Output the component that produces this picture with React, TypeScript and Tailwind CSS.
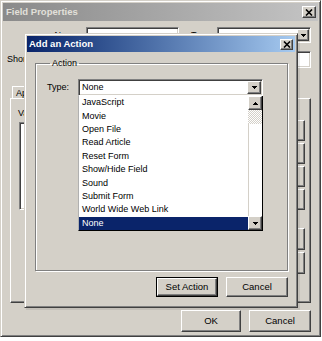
import React from "react";

const raised =
  "border border-t-white border-l-white border-r-[#404040] border-b-[#404040] shadow-[inset_-1px_-1px_0_#808080]";
const sunken =
  "border border-t-[#808080] border-l-[#808080] border-r-white border-b-white shadow-[inset_1px_1px_0_#404040,inset_-1px_-1px_0_#d4d0c8]";

function Arrow({ up }: { up?: boolean }) {
  return (
    <svg width="5" height="3" viewBox="0 0 5 3" shapeRendering="crispEdges">
      {up ? (
        <>
          <rect x="2" y="0" width="1" height="1" fill="#000" />
          <rect x="1" y="1" width="3" height="1" fill="#000" />
          <rect x="0" y="2" width="5" height="1" fill="#000" />
        </>
      ) : (
        <>
          <rect x="0" y="0" width="5" height="1" fill="#000" />
          <rect x="1" y="1" width="3" height="1" fill="#000" />
          <rect x="2" y="2" width="1" height="1" fill="#000" />
        </>
      )}
    </svg>
  );
}

function CloseBtn({ className }: { className: string }) {
  return (
    <div className={`${className} bg-[#d4d0c8] ${raised} flex items-center justify-center`}>
      <svg width="8" height="7" viewBox="0 0 8 7">
        <path d="M1 0.5 L7 6.5 M7 0.5 L1 6.5" stroke="#000" strokeWidth="1.6" fill="none" />
      </svg>
    </div>
  );
}

const items = [
  "JavaScript",
  "Movie",
  "Open File",
  "Read Article",
  "Reset Form",
  "Show/Hide Field",
  "Sound",
  "Submit Form",
  "World Wide Web Link",
  "None",
];

export default function App() {
  return (
    <div className="w-[322px] h-[341px] bg-white relative overflow-hidden font-['Liberation_Sans',Arial,sans-serif] text-[9px] text-black leading-none">
      {/* Outer window: Field Properties */}
      <div className="w-[321px] h-[337px] bg-[#d4d0c8] border border-t-[#d4d0c8] border-l-[#d4d0c8] border-r-[#404040] border-b-[#404040] shadow-[inset_1px_1px_0_#fff,inset_-1px_-1px_0_#808080] p-[2px] flex flex-col">
        <div className="h-[18px] shrink-0 flex items-center justify-between pl-[3px] pr-[2px] bg-gradient-to-r from-[#8a8a8a] to-[#c4c4c4]">
          <span className="font-bold text-[9.5px] text-[#e2e0da]">Field Properties</span>
          <CloseBtn className="w-[14px] h-[12px]" />
        </div>

        <div className="mt-[6px] h-[16px] flex shrink-0">
          <div className="w-[83px] pr-[5px] text-right leading-[16px]">Name:</div>
          <div className={`w-[93px] bg-white ${sunken}`} />
          <div className="w-[38px] pr-[4px] text-right leading-[16px]">Type:</div>
          <div className={`w-[94px] bg-white ${sunken} flex justify-end items-center pr-[1px]`}>
            <div className={`w-[12px] h-[12px] bg-[#d4d0c8] ${raised} flex items-center justify-center`}>
              <Arrow />
            </div>
          </div>
        </div>

        <div className="mt-[8px] h-[17px] flex items-center shrink-0 pr-[7px]">
          <div className="pl-[4px] leading-[17px]">Short Description:</div>
          <div className="flex-1" />
          <div className={`w-[150px] h-[17px] bg-white ${sunken}`} />
        </div>

        <div className="mt-[18px] ml-[9px] flex shrink-0">
          <div className="h-[12px] pl-[3px] pr-[3px] border border-b-0 border-t-white border-l-white border-r-[#404040] bg-[#d4d0c8] leading-[12px]">
            Appearance
          </div>
        </div>

        <div className="ml-[7px] w-[301px] h-[205px] shrink-0 border border-t-white border-l-white border-r-[#404040] border-b-[#404040] shadow-[inset_-1px_-1px_0_#808080] flex pl-[7px] pr-[5px]">
          <div className="flex flex-col">
            <div className="mt-[8px] leading-[12px]">Values:</div>
            <div className={`mt-[3px] ml-[1px] w-[80px] h-[88px] bg-white ${sunken}`} />
          </div>
          <div className="flex-1" />
          <div className="flex flex-col pt-[21px] gap-[2px]">
            {[0, 1, 2, 3].map((b) => (
              <div key={b} className={`w-[34px] h-[21px] ${raised}`} />
            ))}
            <div className="h-[14px]" />
            {[4, 5].map((b) => (
              <div key={b} className={`w-[34px] h-[22px] ${raised}`} />
            ))}
          </div>
        </div>

        <div className="mt-[7px] h-[22px] flex justify-end gap-[8px] pr-[7px] shrink-0">
          <div className={`w-[60px] ${raised} flex items-center justify-center text-[9.5px]`}>OK</div>
          <div className={`w-[62px] ${raised} flex items-center justify-center text-[9.5px]`}>Cancel</div>
        </div>
      </div>

      {/* Inner dialog: Add an Action */}
      <div className="absolute left-[24px] top-[33px] w-[274px] h-[275px] bg-[#d4d0c8] border border-t-[#d4d0c8] border-l-[#d4d0c8] border-r-[#404040] border-b-[#404040] shadow-[inset_1px_1px_0_#fff,inset_-1px_-1px_0_#808080,2px_2px_0_rgba(0,0,0,0.08)] p-[2px] flex flex-col">
        <div className="h-[16px] shrink-0 flex items-center justify-between pl-[2px] pr-[2px] bg-gradient-to-r from-[#0a246a] to-[#a6caf0]">
          <span className="font-bold text-[9.5px] text-white">Add an Action</span>
          <CloseBtn className="w-[13px] h-[11px]" />
        </div>

        <fieldset className="mt-[5px] ml-[8px] w-[253px] border border-[#808080] shadow-[inset_1px_1px_0_#fff,1px_1px_0_#fff] p-0 m-0">
          <legend className="ml-[14px] px-[2px] leading-[12px]">Action</legend>
          <div className="flex flex-col pb-[39px]">
            <div className="mt-[10px] flex h-[17px]">
              <div className="ml-[11px] w-[31px] leading-[17px]">Type:</div>
              <div className={`w-[185px] h-[17px] bg-white ${sunken} flex items-center pl-[2px] pr-[1px]`}>
                <span className="flex-1 leading-[13px] pl-[1px]">None</span>
                <div className={`w-[14px] h-[13px] bg-[#d4d0c8] ${raised} flex items-center justify-center`}>
                  <Arrow />
                </div>
              </div>
            </div>
            <div className="ml-[42px] w-[185px] h-[135px] bg-white border border-t-0 border-l-[#b0b0b0] border-r-black border-b-black flex">
              <div className="flex-1 flex flex-col">
                {items.map((it, i) => (
                  <div
                    key={it}
                    className={`h-[13.4px] pl-[3px] flex items-center whitespace-nowrap ${
                      i === items.length - 1 ? "bg-[#0a246a] text-white" : ""
                    }`}
                  >
                    {it}
                  </div>
                ))}
              </div>
              <div className="w-[14px] flex flex-col">
                <div className={`h-[14px] bg-[#d4d0c8] ${raised} flex items-center justify-center`}>
                  <Arrow up />
                </div>
                <div className="h-[14px] bg-[repeating-conic-gradient(#d4d0c8_0%_25%,#ffffff_0%_50%)] bg-[length:2px_2px]" />
                <div className="flex-1 bg-white border-l border-l-[#d4d0c8]" />
                <div className={`h-[14px] bg-[#d4d0c8] ${raised} flex items-center justify-center`}>
                  <Arrow />
                </div>
              </div>
            </div>
          </div>
        </fieldset>

        <div className="mt-[6px] h-[20px] flex justify-end gap-[8px] pr-[7px] shrink-0">
          <div className="w-[62px] border border-black">
            <div className={`h-full ${raised} flex items-center justify-center text-[9.5px]`}>Set Action</div>
          </div>
          <div className={`w-[62px] ${raised} flex items-center justify-center text-[9.5px]`}>Cancel</div>
        </div>
      </div>
    </div>
  );
}
